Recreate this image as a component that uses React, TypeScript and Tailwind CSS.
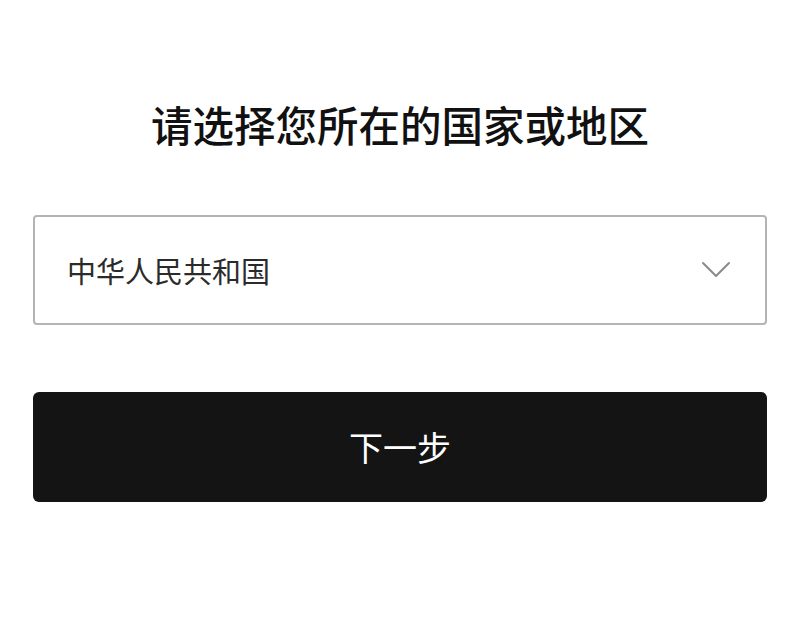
import React from 'react';

const App: React.FC = () => {
  return (
    <div
      className="w-[800px] h-[643px] bg-white px-[33px]"
      style={{ fontFamily: '"Noto Sans CJK SC", "Noto Sans", sans-serif' }}
    >
      <h1 className="pt-[103px] text-center text-[41.5px] leading-[42px] font-medium text-[#111]">
        请选择您所在的国家或地区
      </h1>

      {/* Country select */}
      <div className="mt-[70px] h-[110px] flex items-center justify-between border-2 border-[#b4b4b4] rounded-[4px] pl-[32px] pr-[34px]">
        <span className="text-[29px] text-[#2b2b2b] leading-none">中华人民共和国</span>
        <svg width="30" height="18" viewBox="0 0 30 18" fill="none">
          <path d="M2 2 L15 15 L28 2" stroke="#8a8a8a" strokeWidth="2" strokeLinecap="round" strokeLinejoin="round" />
        </svg>
      </div>

      {/* Next button */}
      <button className="mt-[67px] w-full h-[110px] bg-[#141414] rounded-[6px] flex items-center justify-center text-white text-[34px] leading-none">
        下一步
      </button>
    </div>
  );
};

export default App;
